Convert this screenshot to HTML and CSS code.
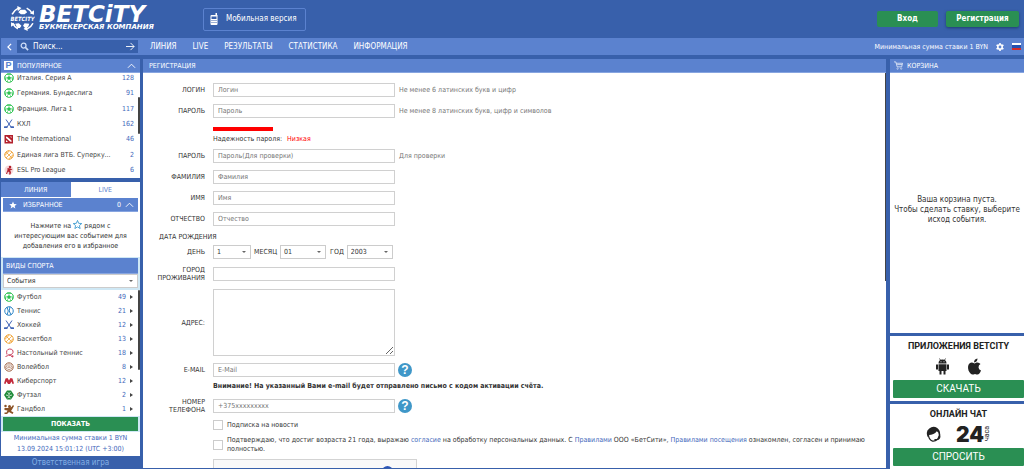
FILE: index.html
```
<!DOCTYPE html>
<html lang="ru">
<head>
<meta charset="utf-8">
<meta name="viewport" content="width=device-width, initial-scale=1">
<title>BETCITY — Регистрация</title>
<link rel="stylesheet" href="styles.css">
</head>
<body>
<svg class="sprite" aria-hidden="true">
  <symbol id="i-football" viewBox="0 0 20 20"><circle cx="10" cy="10" r="8.800" fill="#fff" stroke="#2bc24f" stroke-width="1.800"/><path d="M10 6l4 3-1.500 4.500h-5L6 9z" fill="#2bc24f"/><path d="M6 2l4 2 4-2M2 7l2 2-1 5M18 7l-2 2 1 5M6 18l1-3M14 18l-1-3" fill="none" stroke="#2bc24f" stroke-width="2"/></symbol>
  <symbol id="i-hockey" viewBox="0 0 20 20"><path d="M4 1l10 15h5M16 1L6 16H1" fill="none" stroke="#3f63b5" stroke-width="2"/><path d="M0 15h7v3H0zM13 15h7v3h-7z" fill="#3f63b5"/></symbol>
  <symbol id="i-tennis" viewBox="0 0 20 20"><circle cx="10" cy="10" r="8.500" fill="none" stroke="#2c84c6" stroke-width="2"/><path d="M6 2q5 8 0 16M12 1q-4 9 2 17" fill="none" stroke="#2c84c6" stroke-width="2"/></symbol>
  <symbol id="i-basket" viewBox="0 0 20 20"><circle cx="10" cy="10" r="8.500" fill="none" stroke="#f0a53a" stroke-width="2"/><path d="M4 4l12 12M16 4L4 16M9 1q0 8-8 8M11 19q0-8 8-8" fill="none" stroke="#f0a53a" stroke-width="1.600"/></symbol>
  <symbol id="i-dota" viewBox="0 0 20 20"><path d="M1 2h17v17H1z" fill="#b3202c"/><path d="M4 5l3 1 8 7v3l-3-1-8-7zM12 5h3v3zM4 12l4 4H4z" fill="#fff"/></symbol>
  <symbol id="i-cs" viewBox="0 0 20 20"><circle cx="10" cy="10" r="9" fill="#f6d9dc"/><circle cx="12" cy="4" r="2.500" fill="#b3202c"/><path d="M7 6l6 1 4 2-5 2 2 3-1 5h-3l1-4-3-2-2 5H4l3-8z" fill="#b3202c"/></symbol>
  <symbol id="i-ping" viewBox="0 0 20 20"><path d="M6 13Q3 3 11 2q8 0 7 7-2 6-9 5-2 2-6 3M9 14q4 0 8 4" fill="none" stroke="#c9405c" stroke-width="2"/><circle cx="17" cy="16.500" r="2" fill="#c9405c"/></symbol>
  <symbol id="i-volley" viewBox="0 0 20 20"><circle cx="10" cy="10" r="8.500" fill="none" stroke="#a9745a" stroke-width="2"/><path d="M10 10V2M10 10l7 4M10 10l-7 4M6 3v6l-4 2M14 3v6l4 2M6 17l4-3 4 3" fill="none" stroke="#a9745a" stroke-width="1.500"/></symbol>
  <symbol id="i-cyber" viewBox="0 0 20 20"><path d="M0 15L3 5l4-1 3 5 3-5 4 1 3 10-3 1-2-5-3 5h-4l-3-5-2 5z" fill="#c22a3c"/></symbol>
  <symbol id="i-futsal" viewBox="0 0 20 20"><path d="M6 1h8l6 9-6 9H6l-6-9z" fill="#1f8a38"/><path d="M7 5l3 2 3-2M4 10l4 1M16 10l-4 1M7 16l3-2 3 2M10 7v7" stroke="#fff" stroke-width="1.500" fill="none"/></symbol>
  <symbol id="i-hand" viewBox="0 0 20 20"><circle cx="11" cy="5" r="3" fill="#8a5226"/><circle cx="3" cy="4" r="2.500" fill="#8a5226"/><path d="M1 8l8 0 6-2 3-4 2 2-4 7-2 3 5 3-2 3-7-4-4 4H1v-3h4l2-4-6-1z" fill="#8a5226"/></symbol>
  <symbol id="i-up" viewBox="0 0 10 6"><path d="M1 5l4-4 4 4" fill="none" stroke="currentColor"/></symbol>
  <symbol id="i-star" viewBox="0 0 20 20"><path d="M10 1l2.600 6.400 6.900.500-5.300 4.400 1.700 6.700L10 15.300 4.100 19l1.700-6.700L.5 7.900l6.900-.5z"/></symbol>
</svg>

<header class="top">
  <a class="logo" href="#">
    <svg class="logo-ball" viewBox="0 0 48 48" aria-hidden="true">
      <g fill="none" stroke="#fff" stroke-width="3"><path d="M4 16Q8 8 16 4M32 4q8 4 11 11M5 33q4 8 10 11M33 44q8-4 11-11"/></g>
      <path d="M14 0l8 4-7 6zM46 8v9l-8-3zM2 40v-9l8 4zM34 48l-8-4 7-6z" fill="#fff"/>
      <path d="M20 7h9l4 5-5 4h-7l-5-4zM10 34l7-1 5 5-3 4h-5zM28 33l9 1-2 6-6 2-4-4z" fill="#fff"/>
      <text class="ball-text" x="24" y="29" text-anchor="middle">BETCITY</text>
    </svg>
    <span class="logo-words"><span class="brand">BETCiTY</span><span class="tagline">БУКМЕКЕРСКАЯ КОМПАНИЯ</span></span>
  </a>
  <button class="mobile" type="button">
    <svg viewBox="0 0 16 24" aria-hidden="true"><path d="M11 0h3v4h1v18q0 2-2 2H3q-2 0-2-2V6q0-2 2-2h8z" fill="#fff"/><path d="M3 7h10v5H3zM3 14h2v2H3zM7 14h2v2H7zM11 14h2v2h-2zM3 18h2v2H3zM7 18h2v2H7zM11 18h2v2h-2z" fill="#3860ab"/></svg>
    Мобильная версия
  </button>
  <div class="auth">
    <button class="btn" type="button">Вход</button>
    <button class="btn raised" type="button">Регистрация</button>
  </div>
</header>

<nav class="bar">
  <div class="finder">
    <button class="icon-btn" type="button" aria-label="Свернуть"><svg viewBox="0 0 6 10"><path d="M5 1L1 5l4 4" fill="none" stroke="#fff" stroke-width="1.500"/></svg></button>
    <div class="search">
      <svg viewBox="0 0 10 10" aria-hidden="true"><circle cx="4" cy="4" r="2.700" fill="none" stroke="#cddcf7" stroke-width="1.400"/><path d="M6 6l3 3" stroke="#cddcf7" stroke-width="1.800"/></svg>
      <input type="text" placeholder="Поиск..." aria-label="Поиск">
      <svg viewBox="0 0 10 10" aria-hidden="true"><path d="M0 5h9M5 1l4 4-4 4" fill="none" stroke="#fff"/></svg>
    </div>
  </div>
  <div class="links">
    <a href="#">ЛИНИЯ</a><a href="#">LIVE</a><a href="#">РЕЗУЛЬТАТЫ</a><a href="#">СТАТИСТИКА</a><a href="#">ИНФОРМАЦИЯ</a>
  </div>
  <div class="settings">
    <span>Минимальная сумма ставки 1 BYN</span>
    <button class="icon-btn" type="button" aria-label="Настройки"><svg class="gear" viewBox="0 0 20 20"><circle cx="10" cy="10" r="5.500" fill="none" stroke="#fff" stroke-width="4"/><path d="M10 0v4M10 16v4M1.500 5L5 7M15 13l3.500 2M1.500 15L5 13M15 7l3.500-2" stroke="#fff" stroke-width="4"/></svg></button>
    <span class="flag" role="img" aria-label="Русский"></span>
  </div>
</nav>

<div class="columns">
  <aside class="left">
    <section class="popular">
      <h2 class="title"><span class="p-badge">P</span>ПОПУЛЯРНОЕ<svg class="up"><use href="#i-up"/></svg></h2>
      <div class="scroll popular-scroll">
        <ul class="list">
          <li><svg><use href="#i-football"/></svg><a href="#">Италия. Серия А</a><b>128</b></li>
          <li><svg><use href="#i-football"/></svg><a href="#">Германия. Бундеслига</a><b>91</b></li>
          <li><svg><use href="#i-football"/></svg><a href="#">Франция. Лига 1</a><b>117</b></li>
          <li><svg><use href="#i-hockey"/></svg><a href="#">КХЛ</a><b>162</b></li>
          <li><svg><use href="#i-dota"/></svg><a href="#">The International</a><b>46</b></li>
          <li><svg><use href="#i-basket"/></svg><a href="#">Единая лига ВТБ. Суперку...</a><b>2</b></li>
          <li><svg><use href="#i-cs"/></svg><a href="#">ESL Pro League</a><b>6</b></li>
        </ul>
      </div>
    </section>
    <section class="line">
      <div class="tabs"><button class="active" type="button">ЛИНИЯ</button><button type="button">LIVE</button></div>
      <h2 class="title fav"><svg class="star" viewBox="0 0 20 20"><use href="#i-star"/></svg>ИЗБРАННОЕ<span class="count">0</span><svg class="up"><use href="#i-up"/></svg></h2>
      <p class="hint">Нажмите на <svg class="star-line" viewBox="0 0 20 20"><use href="#i-star"/></svg> рядом с<br>интересующим вас событием для<br>добавления его в избранное</p>
      <div class="sports">
        <h2 class="title">ВИДЫ СПОРТА</h2>
        <div class="pick"><select aria-label="События"><option>События</option></select></div>
      </div>
      <div class="scroll sport-scroll">
        <ul class="list more">
          <li><svg><use href="#i-football"/></svg><a href="#">Футбол</a><b>49</b></li>
          <li><svg><use href="#i-tennis"/></svg><a href="#">Теннис</a><b>21</b></li>
          <li><svg><use href="#i-hockey"/></svg><a href="#">Хоккей</a><b>12</b></li>
          <li><svg><use href="#i-basket"/></svg><a href="#">Баскетбол</a><b>13</b></li>
          <li><svg><use href="#i-ping"/></svg><a href="#">Настольный теннис</a><b>18</b></li>
          <li><svg><use href="#i-volley"/></svg><a href="#">Волейбол</a><b>8</b></li>
          <li><svg><use href="#i-cyber"/></svg><a href="#">Киберспорт</a><b>12</b></li>
          <li><svg><use href="#i-futsal"/></svg><a href="#">Футзал</a><b>2</b></li>
          <li><svg><use href="#i-hand"/></svg><a href="#">Гандбол</a><b>1</b></li>
        </ul>
      </div>
      <div class="show"><button type="button">ПОКАЗАТЬ</button></div>
      <p class="status">Минимальная сумма ставки 1 BYN<br><time>13.09.2024 15:01:12 (UTC +3:00)</time></p>
    </section>
    <a class="responsible" href="#">Ответственная игра</a>
  </aside>

  <main class="main">
    <h1 class="title">РЕГИСТРАЦИЯ</h1>
    <form class="form">
      <div class="row"><label for="login">ЛОГИН</label><input id="login" type="text" placeholder="Логин"><span class="note">Не менее 6 латинских букв и цифр</span></div>
      <div class="row"><label for="pass">ПАРОЛЬ</label><input id="pass" type="password" placeholder="Пароль"><span class="note">Не менее 8 латинских букв, цифр и символов</span></div>
      <div class="strength"><div class="meter"></div>Надежность пароля: <em>Низкая</em></div>
      <div class="row after-strength"><label for="pass2">ПАРОЛЬ</label><input id="pass2" type="password" placeholder="Пароль(Для проверки)"><span class="note">Для проверки</span></div>
      <div class="row"><label for="last">ФАМИЛИЯ</label><input id="last" type="text" placeholder="Фамилия"></div>
      <div class="row"><label for="first">ИМЯ</label><input id="first" type="text" placeholder="Имя"></div>
      <div class="row"><label for="middle">ОТЧЕСТВО</label><input id="middle" type="text" placeholder="Отчество"></div>
      <div class="birth">ДАТА РОЖДЕНИЯ</div>
      <div class="row date">
        <label for="day">ДЕНЬ</label>
        <div class="dates">
          <div class="pick day"><select id="day"><option>1</option></select></div>
          <label for="month">МЕСЯЦ</label><div class="pick month"><select id="month"><option>01</option></select></div>
          <label for="year">ГОД</label><div class="pick month"><select id="year"><option>2003</option></select></div>
        </div>
      </div>
      <div class="row"><label for="city">ГОРОД<br>ПРОЖИВАНИЯ</label><input id="city" type="text"></div>
      <div class="row"><label for="addr">АДРЕС:</label><textarea id="addr"></textarea></div>
      <div class="row"><label for="mail">E-MAIL</label><input id="mail" type="email" placeholder="E-Mail"><button class="help" type="button">?</button></div>
      <strong class="warn">Внимание! На указанный Вами e-mail будет отправлено письмо с кодом активации счёта.</strong>
      <div class="row"><label for="phone">НОМЕР<br>ТЕЛЕФОНА</label><input id="phone" type="tel" placeholder="+375xxxxxxxxx"><button class="help" type="button">?</button></div>
      <div class="check"><input id="news" type="checkbox"><label for="news">Подписка на новости</label></div>
      <div class="check"><input id="agree" type="checkbox"><label for="agree">Подтверждаю, что достиг возраста 21 года, выражаю <a href="#">согласие</a> на обработку персональных данных. С <a href="#">Правилами</a> ООО «БетСити», <a href="#">Правилами посещения</a> ознакомлен, согласен и принимаю<br>полностью.</label></div>
      <div class="captcha"><svg viewBox="0 0 20 20" aria-hidden="true"><path d="M2 10a8 8 0 0 1 16 0" fill="none" stroke="#2c55b8" stroke-width="4"/></svg></div>
    </form>
  </main>

  <aside class="right">
    <section class="cart">
      <h2 class="title"><svg class="cart-icon" viewBox="0 0 20 20"><path d="M0 2h4l3 11h10l2-8H5M7 8h11" fill="none" stroke="currentColor" stroke-width="1.500"/><circle cx="8" cy="17" r="1.600" fill="none" stroke="currentColor"/><circle cx="16" cy="17" r="1.600" fill="none" stroke="currentColor"/></svg>КОРЗИНА</h2>
      <p>Ваша корзина пуста.<br>Чтобы сделать ставку, выберите<br>исход события.</p>
    </section>
    <section class="promo">
      <h3>ПРИЛОЖЕНИЯ BETCITY</h3>
      <div class="glyphs apps">
        <svg viewBox="0 0 28 34"><path d="M6 11a8 8 0 0 1 16 0zM6 12.500h16V26H6zM1 13h4v10H1zM23 13h4v10h-4zM8 24h4v9H8zM16 24h4v9h-4z" fill="#222"/><path d="M8 1l3 5M20 1l-3 5" stroke="#222" stroke-width="1.500"/><circle cx="11" cy="7.500" r="1" fill="#fff"/><circle cx="17" cy="7.500" r="1" fill="#fff"/></svg>
        <svg viewBox="0 0 28 34"><path d="M20 1q0 7-7 8 0-7 7-8zM14 11q2-1 4-2 5-1 8 3-4 2-4 6.500T27 25q-3 8-7 8-2 0-5-1-3 1-5 1Q6 33 2 25-1 14 5 10q4-2 9 1z" fill="#222"/></svg>
      </div>
      <button type="button">СКАЧАТЬ</button>
    </section>
    <section class="promo">
      <h3>ОНЛАЙН ЧАТ</h3>
      <div class="glyphs chat">
        <svg viewBox="0 0 32 34"><path d="M3 21Q-1 9 7 4q8-6 17-1 7 5 6 15l-3 2q1-8-4-10-6 8-17 8-2 1-1 5z" fill="#222"/><path d="M5 17q1 12 9 14 11 1 14-11M29 17q2 10-6 11h-5" fill="none" stroke="#222" stroke-width="2.800"/></svg>
        <span class="big">24</span><span class="hours">часа</span>
      </div>
      <button type="button">СПРОСИТЬ</button>
    </section>
  </aside>
</div>
</body>
</html>
```
FILE: styles.css
```
:root {
  --navy: #3860ab;
  --blue: #5b82cf;
  --green: #2a8f53;
  --pale: #cfe8f5;
  --link: #3f68bb;
  --ink: #333;
  --sans: Tahoma, "DejaVu Sans Condensed", "DejaVu Sans", sans-serif;
}
* { box-sizing: border-box; }
body {
  margin: 0;
  height: 100vh;
  overflow: hidden;
  display: flex;
  flex-direction: column;
  background: var(--navy);
  color: var(--ink);
  font: 7px/8px var(--sans);
}
h1, h2, h3, p, ul { margin: 0; padding: 0; font-weight: normal; }
a { color: inherit; text-decoration: none; }
button, input, select, textarea { font: inherit; color: inherit; margin: 0; padding: 0; border: 0; background: none; border-radius: 0; }
svg { display: block; flex: none; }
.sprite { width: 0; height: 0; flex: none; position: absolute; }

.top { display: flex; align-items: center; flex: none; height: 38px; padding: 0 5px 0 10px; color: #fff; }
.logo { display: flex; align-items: center; gap: 4px; width: 193px; padding-bottom: 2px; }
.logo-ball { width: 25px; height: 25px; }
.ball-text { font: italic bold 11px "DejaVu Sans Condensed", sans-serif; fill: #fff; }
.logo-words { display: flex; flex-direction: column; }
.brand { font: italic 900 23px/19px "DejaVu Sans", sans-serif; }
.tagline { font: italic bold 7px/7px "DejaVu Sans", sans-serif; }
.mobile { display: flex; align-items: center; gap: 8px; height: 23px; padding: 0 8px 0 6px; border: 1px solid var(--blue); border-radius: 2px; font-size: 8px; }
.mobile svg { width: 8px; height: 12px; }
.auth { display: flex; gap: 8px; margin-left: auto; }
.btn { height: 16px; width: 61px; border-radius: 2px; background: var(--green); font-size: 8px; font-weight: bold; }
.btn.raised { width: 73px; box-shadow: 0 1px 3px #1f3b73; }

.bar { display: flex; align-items: center; flex: none; height: 17px; margin: 0 0 4px 1px; background: var(--blue); color: #fff; font-size: 8px; }
.finder { display: flex; align-items: center; width: 138px; padding-right: 1px; }
.icon-btn { display: flex; align-items: center; justify-content: center; flex: none; width: 16px; height: 14px; }
.icon-btn svg { width: 5px; height: 8px; }
.search { display: flex; align-items: center; flex: 1; min-width: 0; height: 13px; padding: 0 3px; gap: 4px; background: var(--navy); }
.search svg { width: 9px; height: 9px; }
.search input { flex: 1; min-width: 0; }
.search input::placeholder { color: #fff; opacity: 1; }
.links { display: flex; gap: 16px; margin-left: 11px; }
.settings { display: flex; align-items: center; margin-left: auto; padding-right: 3px; gap: 4px; font-size: 7px; }
.icon-btn .gear { width: 8px; height: 8px; }
.flag { width: 9px; height: 7px; background: linear-gradient(#fff 0 33%, #2450b0 33% 66%, #d22b2b 66%); }

.columns { display: flex; flex: 1; min-height: 0; padding-left: 1px; }
.title { display: flex; align-items: center; height: 14px; padding: 0 6px; background: var(--blue); color: #fff; font-size: 7px; border-bottom: 1px solid #87a5e0; flex: none; }
.up { width: 9px; height: 6px; margin-left: auto; }
.left { display: flex; flex-direction: column; width: 139px; flex: none; }
.left > section { background: #fff; }
.popular .title { padding: 0 4px 0 3px; }
.p-badge { width: 9px; height: 9px; margin-right: 4px; background: #fff; color: var(--blue); font: bold 9px/9px "Liberation Sans", sans-serif; text-align: center; }
.scroll { position: relative; display: flex; flex-direction: column; justify-content: flex-end; overflow: hidden; }
.scroll::after { content: ""; position: absolute; right: 0; width: 2px; background: #444; border-radius: 1px; }
.popular-scroll { height: 105px; }
.popular-scroll::after { top: 24px; height: 37px; }
.popular .list { flex: none; height: 108px; }
.sport-scroll::after { top: 0; height: 80px; }
.list { list-style: none; display: grid; grid-auto-rows: 1fr; padding: 0 6px 0 3px; }
.list li { display: flex; align-items: center; gap: 3px; color: #444; }
.list svg { width: 10px; height: 10px; }
.list a { flex: 1; white-space: nowrap; }
.list b { font-weight: normal; color: var(--link); }
.more li { height: 14px; }
.more li::after { content: ""; border: solid transparent; border-width: 2px 0 2px 3px; border-left-color: #444; margin: 0 1px; }
.line { margin-top: 4px; }
.tabs { display: flex; height: 15px; }
.tabs button { flex: 1; color: var(--blue); }
.tabs .active { background: var(--blue); color: #fff; }
.fav { margin: 1px 2px 0; padding: 0 4px 0 6px; }
.star { width: 8px; height: 8px; margin-right: 6px; fill: #fff; }
.count { margin-left: auto; }
.fav .up { margin-left: 4px; }
.hint { padding: 8px 0 6px; text-align: center; line-height: 10px; }
.star-line { display: inline-block; width: 9px; height: 9px; fill: #fff; stroke: #3d9bd0; stroke-width: 2; vertical-align: -1px; overflow: visible; }
.sports { padding: 1px 2px 2px; background: var(--pale); }
.sports .title { height: 16px; padding: 0 3px; }
.pick { display: grid; align-items: center; }
.pick select { grid-area: 1 / 1; appearance: none; width: 100%; height: 14px; padding: 0 3px; background: #fff; border: 1px solid #ccc; }
.pick::after { content: ""; grid-area: 1 / 1; justify-self: end; margin-right: 5px; border: solid transparent; border-width: 2px 2px 0; border-top-color: #666; pointer-events: none; }
.show { padding: 1px 2px; background: var(--pale); }
.show button { width: 100%; height: 14px; background: var(--green); color: #fff; font-weight: bold; }
.status { padding: 1px 0; text-align: center; line-height: 11px; color: var(--link); }
.responsible { margin: auto; color: #86b0e6; font-size: 8px; }

.main { flex: 1; min-width: 0; margin-left: 3px; display: flex; flex-direction: column; background: #fff; border-bottom: 1px solid var(--navy); position: relative; overflow: hidden; }
.main::after { content: ""; position: absolute; right: 0; top: 14px; width: 1px; height: 208px; background: #444; }
.form { padding: 3px 6px 0 0; --label: 62px; }
.row { display: flex; align-items: center; margin-top: 7px; }
.row > label { width: var(--label); margin-right: 8px; text-align: right; flex: none; }
.row > input, .row > textarea { width: 182px; height: 14px; padding: 0 4px; border: 1px solid #d0d0d0; background: #fff; }
.row > textarea { height: 67px; display: block; }
.form ::placeholder { color: #757575; opacity: 1; }
.note { margin-left: 4px; color: #777; }
.strength { margin: 9px 0 0 70px; line-height: 12px; }
.meter { width: 60px; height: 4px; margin-bottom: 2px; background: #f00; }
.strength em { font-style: normal; color: #f00; margin-left: 3px; }
.after-strength { margin-top: 4px; }
.birth { padding: 6px 0 3px 16px; line-height: 10px; }
.row.date { margin-top: 0; }
.dates { display: flex; align-items: center; gap: 3px; }
.day { width: 38px; }
.month { width: 46px; margin-right: 1px; }
.help { width: 14px; height: 14px; margin-left: 3px; border-radius: 50%; background: #3f97c8; color: #fff; font: bold 12px/14px "Liberation Sans", sans-serif; }
.warn { display: block; margin: 5px 0 0 70px; line-height: 9px; }
.check { display: flex; align-items: center; gap: 4px; margin: 6px 0 0 70px; line-height: 9px; }
.check input { appearance: none; flex: none; width: 10px; height: 10px; border: 1px solid #ccc; }
.check a { color: var(--link); }
.captcha { display: flex; justify-content: flex-end; width: 204px; height: 40px; margin: 5px 0 0 70px; padding: 6px 23px; background: #f9f9f9; border: 1px solid #d3d3d3; }
.captcha svg { width: 11px; height: 11px; }

.right { display: flex; flex-direction: column; gap: 3px; width: 134px; margin-left: 4px; flex: none; }
.right > section { background: #fff; }
.cart { flex: 1; display: flex; flex-direction: column; }
.cart .title { padding: 0 4px; gap: 4px; }
.cart-icon { width: 9px; height: 9px; }
.cart p { margin: auto; padding-top: 14px; text-align: center; font-size: 8px; line-height: 10px; }
.promo { display: flex; flex-direction: column; padding: 4px 0 3px 3px; text-align: center; font-family: Roboto, sans-serif; color: #222; }
.promo h3 { font-weight: bold; font-size: 9px; line-height: 12px; }
.glyphs { display: flex; align-items: center; justify-content: center; height: 28px; }
.glyphs svg { width: 15px; height: 17px; }
.apps { gap: 17px; }
.big { margin-left: 15px; font: 900 21px/21px Inter, sans-serif; }
.hours { writing-mode: vertical-rl; transform: rotate(180deg); font-size: 7px; line-height: 7px; }
.promo button { height: 18px; background: var(--green); color: #fff; font-size: 10px; border-radius: 1px; }
```
